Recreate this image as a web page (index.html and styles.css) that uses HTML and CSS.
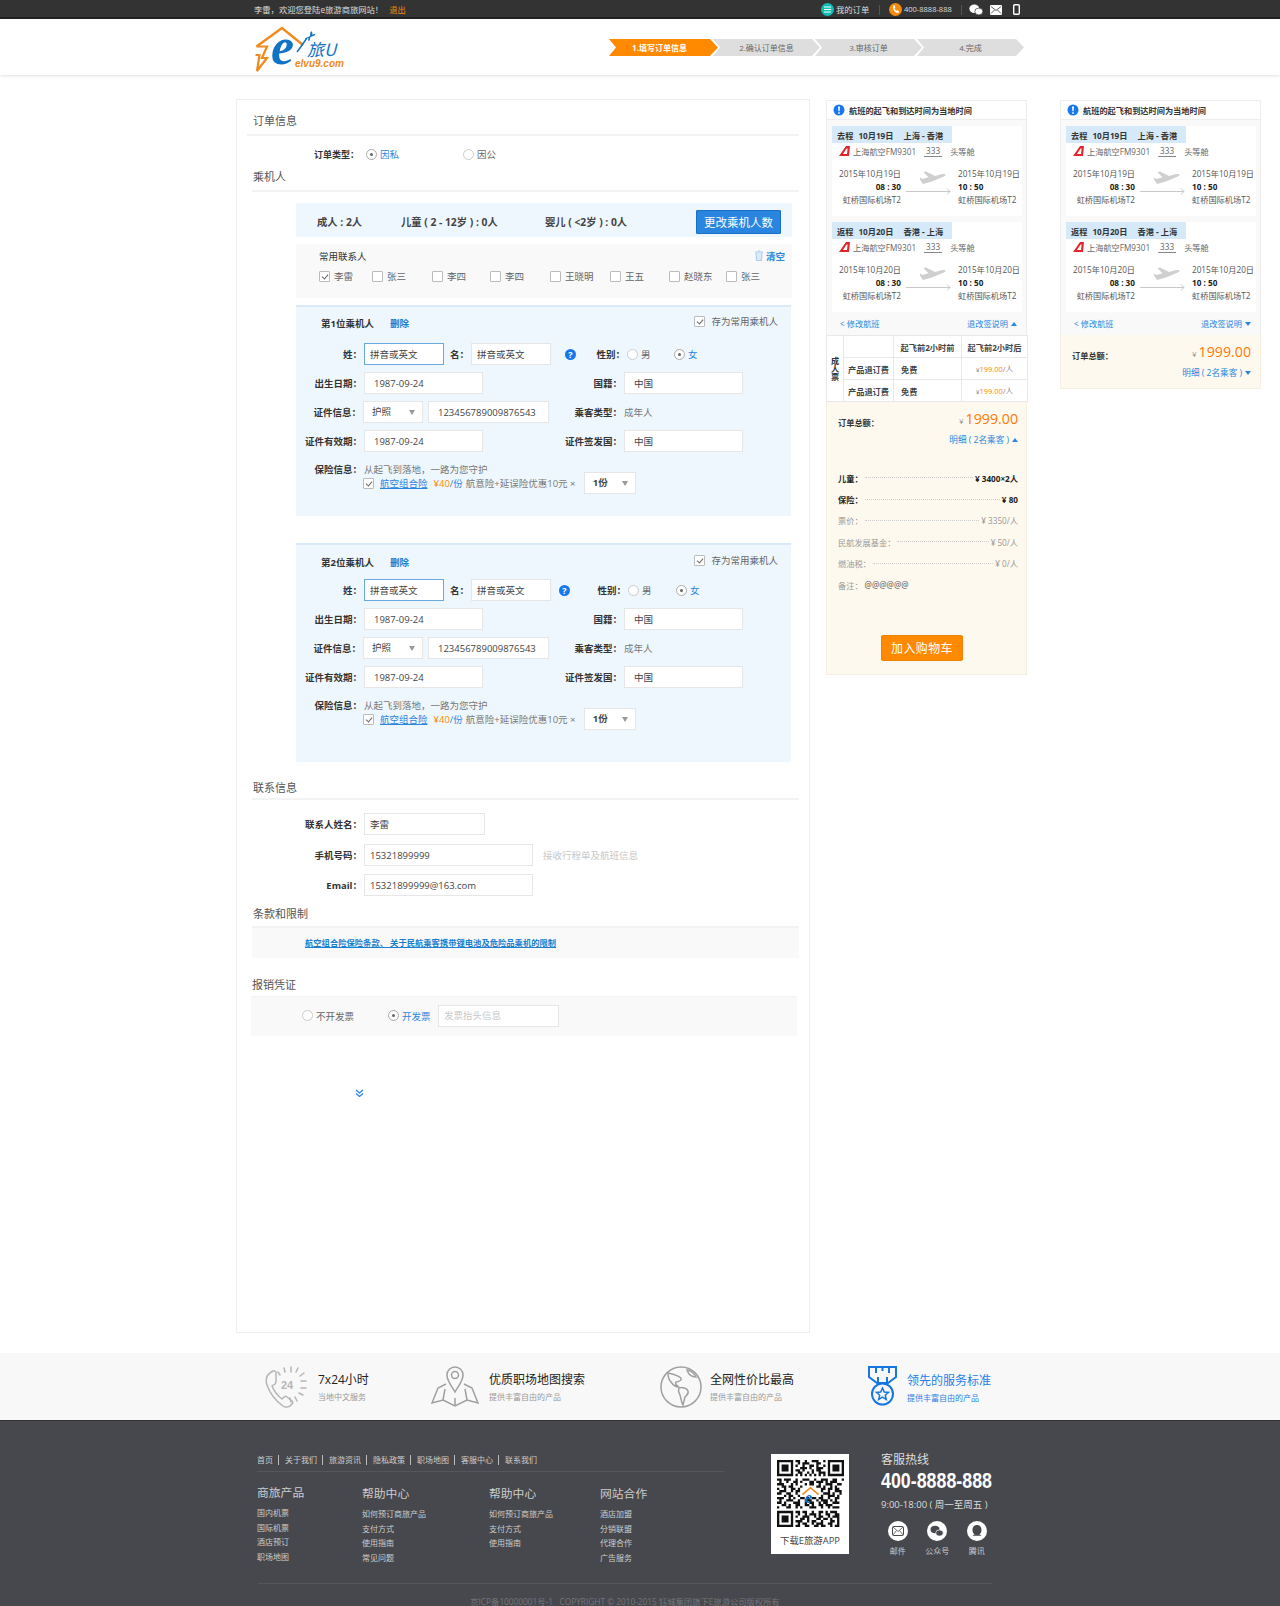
FILE: index.html
```html
<!DOCTYPE html>
<html lang="zh-CN">
<head>
<meta charset="utf-8">
<title>填写订单信息 - e旅U</title>
<link rel="stylesheet" href="styles.css">
</head>
<body>
<svg class="defs" width="0" height="0" aria-hidden="true">
  <symbol id="airline" viewBox="0 0 11 10"><path fill-rule="evenodd" d="M0 10 7 0h4l-1 10zM4 8h4l.6-5.500h-1z" fill="#e3262e"/></symbol>
  <symbol id="flyline" viewBox="0 0 46 26"><path d="M14 9.5 17 14l9-2.6 13-5.4c2-1-.5-2.6-3.5-1.8L29 6 20 1.5l-2.500.7 5 5-6 1.8-2.200-1.500z" fill="#cfcfcf"/><path d="M0 21.500h44M41 18.500l3 3-3 3" fill="none" stroke="#c8c8c8"/></symbol>
  <symbol id="alert" viewBox="0 0 12 12"><circle cx="6" cy="6" r="5.500" fill="#1677ee"/><path d="M5 2.500h2L6.600 7.300H5.400zM5.200 8.200h1.600v1.500H5.200z" fill="#fff"/></symbol>
</svg>

<header class="topbar">
  <div class="topbar-left">李雷，欢迎您登陆e旅游商旅网站！<a class="logout">退出</a></div>
  <div class="topbar-right">
    <svg class="tb-ico" width="13" height="13" viewBox="0 0 13 13"><circle cx="6.500" cy="6.500" r="6.500" fill="#11bcb5"/><path d="M3 4h7M3 6.500h7M3 9h7" stroke="#fff" stroke-width="1.100"/></svg>
    <span class="tb-order">我的订单</span>
    <i class="tb-div"></i>
    <svg class="tb-ico" width="13" height="13" viewBox="0 0 13 13"><circle cx="6.500" cy="6.500" r="6.500" fill="#f58a0b"/><path d="M4 2.500 5.500 2l1 2.500-1 .8c.3 1 .9 1.800 2 2.400l1-.7 1.700 2-1 1C6 10 3.300 6.500 4 2.500z" fill="#fff"/></svg>
    <span class="tb-phone">400-8888-888</span>
    <i class="tb-div tb-div2"></i>
    <svg width="14" height="12" viewBox="0 0 14 12"><ellipse cx="5.300" cy="4.700" rx="5" ry="4.200" fill="#fff"/><ellipse cx="9.800" cy="7.500" rx="4" ry="3.400" fill="#fff" stroke="#333" stroke-width=".7"/></svg>
    <svg class="tb-mail" width="12" height="10" viewBox="0 0 12 10"><rect width="12" height="10" rx="1" fill="#fff"/><path d="M1 1.500 6 5.500l5-4M1 8.500l3.500-3.500M11 8.500 7.500 5" fill="none" stroke="#333" stroke-width=".8"/></svg>
    <svg class="tb-mobile" width="7" height="11" viewBox="0 0 7 11"><rect x=".7" y=".7" width="5.600" height="9.600" rx="1" fill="none" stroke="#fff" stroke-width="1.400"/></svg>
  </div>
</header>

<div class="masthead">
  <svg class="logo" width="100" height="54" viewBox="0 0 100 54">
    <path d="M6.500 24.500 32 6l21 17" fill="none" stroke="#f08a1d" stroke-width="2.400"/>
    <path d="M6.500 24.500H17L12 36h5L7 49l2.500-16H5.500" fill="none" stroke="#f08a1d" stroke-width="2.200"/>
    <text class="logo-e" x="21" y="42">e</text>
    <path d="M47 30c4-5 7-10 10-14" fill="none" stroke="#1273c4" stroke-width="1.500"/>
    <path d="M55 16.500 60 14l.5-4 1.500-.8.500 3.500 3-1.200-1 2-4 1.500-1 3.500-1.300.5.200-3.300-3.400 1.400z" fill="#1273c4"/>
    <text class="logo-cn" x="57" y="34">旅U</text>
    <text class="logo-en" x="45" y="45">elvu9.com</text>
  </svg>
  <ol class="steps">
    <li class="step step-on">1.填写订单信息</li>
    <li class="step">2.确认订单信息</li>
    <li class="step">3.审核订单</li>
    <li class="step">4.完成</li>
  </ol>
</div>

<div class="body-wrap">
  <main class="card">
    <h2 class="sec-head sec-first">订单信息</h2>
    <div class="type-row">
      <span class="type-label">订单类型：</span>
      <span class="opt opt-on opt-w-a"><i class="radio on"></i>因私</span>
      <span class="opt"><i class="radio"></i>因公</span>
    </div>
    <h2 class="sec-head sec-pax">乘机人</h2>

    <div class="counts">
      <span class="c1">成人 : 2人</span>
      <span class="c2">儿童 ( 2 - 12岁 ) : 0人</span>
      <span class="c3">婴儿 ( &lt;2岁 ) : 0人</span>
      <button class="btn-change" type="button">更改乘机人数</button>
    </div>

    <div class="contacts">
      <div class="contacts-top">
        <span>常用联系人</span>
        <a class="clear">
          <svg width="10" height="11" viewBox="0 0 10 11"><path d="M1 2h8M2 2.500l.5 8h5l.5-8M4 1h2" fill="#dbeaf7" stroke="#a9cbe8"/></svg>清空</a>
      </div>
      <div class="contacts-grid">
        <label class="cc"><i class="check on"></i>李雷</label>
        <label class="cc"><i class="check"></i>张三</label>
        <label class="cc"><i class="check"></i>李四</label>
        <label class="cc"><i class="check"></i>李四</label>
        <label class="cc"><i class="check"></i>王晓明</label>
        <label class="cc"><i class="check"></i>王五</label>
        <label class="cc"><i class="check"></i>赵晓东</label>
        <label class="cc"><i class="check"></i>张三</label>
      </div>
    </div>

    <section class="pax pax-1">
      <div class="pax-title"><b>第1位乘机人</b><a class="del">删除</a><span class="save"><i class="check on"></i>存为常用乘机人</span></div>
      <div class="row row-first">
        <span class="lbl l68">姓：</span><input class="inp w80 focus" value="拼音或英文" readonly>
        <span class="lbl l27">名：</span><input class="inp w80" value="拼音或英文" readonly>
        <span class="help">?</span>
        <span class="lbl lsex">性别：</span>
        <span class="opt opt-w-sex"><i class="radio"></i>男</span>
        <span class="opt opt-on"><i class="radio on"></i>女</span>
      </div>
      <div class="row"><span class="lbl l68">出生日期：</span><input class="inp w119 pad" value="1987-09-24" readonly><span class="lbl l141">国籍：</span><input class="inp w119 pad" value="中国" readonly></div>
      <div class="row"><span class="lbl l67">证件信息：</span><div class="sel w60">护照</div><input class="inp w121 pad ml5" value="123456789009876543" readonly><span class="lbl l75">乘客类型：</span><span class="muted">成年人</span></div>
      <div class="row"><span class="lbl l68">证件有效期：</span><input class="inp w119 pad" value="1987-09-24" readonly><span class="lbl l141">证件签发国：</span><input class="inp w119 pad" value="中国" readonly></div>
      <div class="row row-ins"><span class="lbl l68">保险信息：</span><span class="muted">从起飞到落地，一路为您守护</span></div>
      <div class="row-ins2"><i class="check on"></i><a class="ins-link">航空组合险</a><span class="ins-price"><em>¥40</em>/份</span><span class="ins-note">航意险+延误险优惠10元 ×</span><div class="sel w52">1份</div></div>
    </section>

    <section class="pax pax-2">
      <div class="pax-title"><b>第2位乘机人</b><a class="del">删除</a><span class="save"><i class="check on"></i>存为常用乘机人</span></div>
      <div class="row row-first">
        <span class="lbl l68">姓：</span><input class="inp w80 focus" value="拼音或英文" readonly>
        <span class="lbl l27">名：</span><input class="inp w80" value="拼音或英文" readonly>
        <span class="help">?</span>
        <span class="lbl lsex">性别：</span>
        <span class="opt opt-w-sex"><i class="radio"></i>男</span>
        <span class="opt opt-on"><i class="radio on"></i>女</span>
      </div>
      <div class="row"><span class="lbl l68">出生日期：</span><input class="inp w119 pad" value="1987-09-24" readonly><span class="lbl l141">国籍：</span><input class="inp w119 pad" value="中国" readonly></div>
      <div class="row"><span class="lbl l67">证件信息：</span><div class="sel w60">护照</div><input class="inp w121 pad ml5" value="123456789009876543" readonly><span class="lbl l75">乘客类型：</span><span class="muted">成年人</span></div>
      <div class="row"><span class="lbl l68">证件有效期：</span><input class="inp w119 pad" value="1987-09-24" readonly><span class="lbl l141">证件签发国：</span><input class="inp w119 pad" value="中国" readonly></div>
      <div class="row row-ins"><span class="lbl l68">保险信息：</span><span class="muted">从起飞到落地，一路为您守护</span></div>
      <div class="row-ins2"><i class="check on"></i><a class="ins-link">航空组合险</a><span class="ins-price"><em>¥40</em>/份</span><span class="ins-note">航意险+延误险优惠10元 ×</span><div class="sel w52">1份</div></div>
    </section>

    <h2 class="sec-head sec-contact">联系信息</h2>
    <div class="c-row c-row-1"><span class="lbl c-lbl">联系人姓名：</span><input class="inp w121 cpad" value="李雷" readonly></div>
    <div class="c-row c-row-2"><span class="lbl c-lbl">手机号码：</span><input class="inp w169 cpad" value="15321899999" readonly><span class="hint">接收行程单及航班信息</span></div>
    <div class="c-row c-row-3"><span class="lbl c-lbl">Email：</span><input class="inp w169 cpad" value="15321899999@163.com" readonly></div>

    <h2 class="sec-head sec-terms">条款和限制</h2>
    <div class="terms"><a>航空组合险保险条款、 关于民航乘客携带锂电池及危险品乘机的限制</a></div>

    <h2 class="sec-head sec-invoice">报销凭证</h2>
    <div class="invoice">
      <span class="opt opt-w-inv"><i class="radio"></i>不开发票</span>
      <span class="opt opt-on opt-w-inv2"><i class="radio on"></i>开发票</span>
      <input class="inp w121 cpad" placeholder="发票抬头信息" readonly>
    </div>
    <svg class="more" width="9" height="9" viewBox="0 0 9 9"><path d="M1 1l3.500 3L8 1M1 4.500l3.500 3 3.500-3" fill="none" stroke="#2a85e0" stroke-width="1.300"/></svg>
  </main>

  <aside class="side">
    <div class="side-head"><svg width="12" height="12"><use href="#alert"/></svg>航班的起飞和到达时间为当地时间</div>
    <div class="side-body">
      <div class="flight">
        <div class="pill"><b>去程</b><b class="pill-date">10月19日</b><span class="pill-route">上海 - 香港</span></div>
        <div class="carrier"><svg width="11" height="10"><use href="#airline"/></svg><span>上海航空FM9301</span><u>333</u><span>头等舱</span></div>
        <div class="route">
          <span class="r-l">2015年10月19日</span><svg class="fly" width="46" height="26"><use href="#flyline"/></svg><span>2015年10月19日</span>
          <b class="r-l">08 : 30</b><b>10 : 50</b>
          <span class="r-l">虹桥国际机场T2</span><span>虹桥国际机场T2</span>
        </div>
      </div>
      <div class="flight flight-2">
        <div class="pill"><b>返程</b><b class="pill-date">10月20日</b><span class="pill-route">香港 - 上海</span></div>
        <div class="carrier"><svg width="11" height="10"><use href="#airline"/></svg><span>上海航空FM9301</span><u>333</u><span>头等舱</span></div>
        <div class="route">
          <span class="r-l">2015年10月20日</span><svg class="fly" width="46" height="26"><use href="#flyline"/></svg><span>2015年10月20日</span>
          <b class="r-l">08 : 30</b><b>10 : 50</b>
          <span class="r-l">虹桥国际机场T2</span><span>虹桥国际机场T2</span>
        </div>
      </div>
      <div class="side-links"><a>&lt; 修改航班</a><a>退改签说明<i class="tri up"></i></a></div>
    </div>
    <table class="rules">
      <colgroup><col class="col-a"><col class="col-b"><col class="col-c"><col class="col-d"></colgroup>
      <tr><th class="vert" rowspan="3">成<br>人<br>票</th><th></th><th>起飞前2小时前</th><th>起飞前2小时后</th></tr>
      <tr><th>产品退订费</th><td class="strong">免费</td><td class="fee-cell"><small>¥</small><em>199.00</em>/人</td></tr>
      <tr><th>产品退订费</th><td class="strong">免费</td><td class="fee-cell"><small>¥</small><em>199.00</em>/人</td></tr>
    </table>
    <div class="sum sum-open">
      <div class="sum-total"><b>订单总额：</b><span class="price"><small>¥</small>1999.00</span></div>
      <div class="sum-detail">明细 ( 2名乘客 )<i class="tri up"></i></div>
      <div class="fees">
        <div class="fee fee-main"><span>儿童：</span><i class="dots"></i><span>¥ 3400×2人</span></div>
        <div class="fee fee-main"><span>保险：</span><i class="dots"></i><span>¥ 80</span></div>
        <div class="fee"><span>票价：</span><i class="dots"></i><span>¥ 3350/人</span></div>
        <div class="fee"><span>民航发展基金：</span><i class="dots"></i><span>¥ 50/人</span></div>
        <div class="fee"><span>燃油税：</span><i class="dots"></i><span>¥ 0/人</span></div>
        <div class="fee"><span>备注：</span><span class="fee-note">@@@@@@</span></div>
      </div>
      <button class="btn-cart" type="button">加入购物车</button>
    </div>
  </aside>

  <aside class="side side-2">
    <div class="side-head"><svg width="12" height="12"><use href="#alert"/></svg>航班的起飞和到达时间为当地时间</div>
    <div class="side-body">
      <div class="flight">
        <div class="pill"><b>去程</b><b class="pill-date">10月19日</b><span class="pill-route">上海 - 香港</span></div>
        <div class="carrier"><svg width="11" height="10"><use href="#airline"/></svg><span>上海航空FM9301</span><u>333</u><span>头等舱</span></div>
        <div class="route">
          <span class="r-l">2015年10月19日</span><svg class="fly" width="46" height="26"><use href="#flyline"/></svg><span>2015年10月19日</span>
          <b class="r-l">08 : 30</b><b>10 : 50</b>
          <span class="r-l">虹桥国际机场T2</span><span>虹桥国际机场T2</span>
        </div>
      </div>
      <div class="flight flight-2">
        <div class="pill"><b>返程</b><b class="pill-date">10月20日</b><span class="pill-route">香港 - 上海</span></div>
        <div class="carrier"><svg width="11" height="10"><use href="#airline"/></svg><span>上海航空FM9301</span><u>333</u><span>头等舱</span></div>
        <div class="route">
          <span class="r-l">2015年10月20日</span><svg class="fly" width="46" height="26"><use href="#flyline"/></svg><span>2015年10月20日</span>
          <b class="r-l">08 : 30</b><b>10 : 50</b>
          <span class="r-l">虹桥国际机场T2</span><span>虹桥国际机场T2</span>
        </div>
      </div>
      <div class="side-links"><a>&lt; 修改航班</a><a>退改签说明<i class="tri down"></i></a></div>
    </div>
    <div class="sum">
      <div class="sum-total"><b>订单总额：</b><span class="price"><small>¥</small>1999.00</span></div>
      <div class="sum-detail">明细 ( 2名乘客 )<i class="tri down"></i></div>
    </div>
  </aside>
</div>

<section class="features">
  <div class="feature f1">
    <svg width="44" height="44" viewBox="0 0 44 44" fill="none" stroke="#b5b5b5" stroke-width="1.500"><path d="M9 6C3 9 1 14 3 20c3 9 9 16 16 21 3 2 7 1 9-2 1-1 1-2 0-3l-5-4c-1-1-2-1-3 0l-2 2c-4-3-8-8-10-13l3-2c1-1 1-2 1-3L12 7c-1-1-2-2-3-1z"/><path d="M14 7l2 3M20 3l1 4M27 2v5M34 3l-2 4M40 8l-4 3M42 16h-5M42 23h-5M39 30l-4-2M33 36l-2-4M26 33l1 4" stroke-linecap="round"/><text class="f-24" x="17" y="24">24</text></svg>
    <div class="f-text"><div class="f-title">7x24小时</div><div class="f-sub">当地中文服务</div></div>
  </div>
  <div class="feature f2">
    <svg width="48" height="44" viewBox="0 0 48 44" fill="none" stroke="#a0a0a0" stroke-width="1.500"><path d="M24 27c-4-7-8-11-8-17a8 8 0 0 1 16 0c0 6-4 10-8 17z"/><circle cx="24" cy="10" r="3.500"/><path d="M15 19 7 23 1 38l11-3 12 6 12-6 11 3-6-15-8-4M12 35l2-11M36 35l-2-11M24 33v8"/></svg>
    <div class="f-text"><div class="f-title">优质职场地图搜索</div><div class="f-sub">提供丰富自由的产品</div></div>
  </div>
  <div class="feature f3">
    <svg width="44" height="44" viewBox="0 0 44 44" fill="none" stroke="#a0a0a0" stroke-width="1.500"><circle cx="22" cy="22" r="20"/><path d="M9 8c4 1 9 2 13 5 1 2-2 4-5 4-1 2 1 4 3 5-3 0-6-2-8-5-2-2-3-5-3-9zM20 23c3-1 8 0 9 3s-1 4-3 6l-2 8c-2-3-2-7-3-10-1-2-2-5-1-7zM28 5c3 0 7 3 9 7-3 0-7-1-9-7z"/></svg>
    <div class="f-text"><div class="f-title">全网性价比最高</div><div class="f-sub">提供丰富自由的产品</div></div>
  </div>
  <div class="feature f4">
    <svg width="29" height="40" viewBox="0 0 29 40" fill="none" stroke="#1677e0" stroke-width="2"><path d="M1 1h27v10l-8 6H9L1 11z"/><path d="M8 1v6M14.500 1v4M21 1v6M10 17v-6M19 17v-6"/><circle cx="14.500" cy="28" r="10.500"/><path d="m14.500 22 1.800 4 4.200.4-3.200 2.800 1 4.200-3.800-2.300-3.800 2.300 1-4.200-3.200-2.800 4.200-.4z" stroke-width="1.500"/></svg>
    <div class="f-text"><div class="f-title">领先的服务标准</div><div class="f-sub">提供丰富自由的产品</div></div>
  </div>
</section>

<footer class="footer">
  <div class="foot-main">
    <div class="foot-left">
      <nav class="foot-nav"><a>首页</a><a>关于我们</a><a>旅游资讯</a><a>隐私政策</a><a>职场地图</a><a>客服中心</a><a>联系我们</a></nav>
      <div class="foot-cols">
        <div class="foot-col foot-col-1"><h3>商旅产品</h3><a>国内机票</a><a>国际机票</a><a>酒店预订</a><a>职场地图</a></div>
        <div class="foot-col"><h3>帮助中心</h3><a>如何预订商旅产品</a><a>支付方式</a><a>使用指南</a><a>常见问题</a></div>
        <div class="foot-col"><h3>帮助中心</h3><a>如何预订商旅产品</a><a>支付方式</a><a>使用指南</a></div>
        <div class="foot-col"><h3>网站合作</h3><a>酒店加盟</a><a>分销联盟</a><a>代理合作</a><a>广告服务</a></div>
      </div>
    </div>
    <div class="qr">
      <svg width="67" height="67" viewBox="0 0 29 29">
        <path fill="#111" fill-rule="evenodd" d="M0 0h7v7H0zM1 1v5h5V1zM2 2h3v3H2zM22 0h7v7h-7zM23 1v5h5V1zM24 2h3v3h-3zM0 22h7v7H0zM1 23v5h5v-5zM2 24h3v3H2z"/>
        <path stroke="#111" stroke-width="1" fill="none" d="M8 .5h2m2 0h1m2 0h3m2 0h1M9 1.500h1m1 0h3m3 0h2M8 2.500h1m2 0h1m2 0h2m1 0h1m2 0h1M10 3.500h3m1 0h1m2 0h3M8 4.500h2m1 0h1m3 0h1m1 0h2M9 5.500h2m2 0h1m1 0h1m2 0h3M8 6.500h1m1 0h1m1 0h1m1 0h1m1 0h1m1 0h1m1 0h1M0 8.500h2m1 0h3m2 0h1m2 0h3m2 0h1m2 0h3m2 0h2m2 0h1M1 9.500h1m2 0h1m2 0h2m1 0h1m3 0h2m1 0h3m1 0h1m1 0h3M0 10.500h3m3 0h1m1 0h1m3 0h1m1 0h2m2 0h1m2 0h3m2 0h2M2 11.500h2m1 0h2m3 0h1m6 0h2m1 0h1m2 0h1m1 0h1M0 12.500h1m2 0h1m2 0h2m1 0h1m9 0h2m1 0h2m1 0h2M1 13.500h3m2 0h1m1 0h2m9 0h1m2 0h1m2 0h3M0 14.500h2m2 0h2m2 0h1m11 0h3m1 0h1m2 0h1M3 15.500h1m1 0h2m2 0h1m9 0h1m2 0h3m1 0h1M0 16.500h3m2 0h1m1 0h1m2 0h2m1 0h1m1 0h2m1 0h2m2 0h1m2 0h2M1 17.500h1m2 0h3m2 0h1m2 0h3m2 0h1m1 0h3m1 0h1m1 0h1M0 18.500h2m1 0h1m3 0h3m2 0h1m1 0h2m2 0h1m1 0h2m2 0h3M2 19.500h2m1 0h1m2 0h2m2 0h2m1 0h1m2 0h2m1 0h3M0 20.500h1m3 0h2m2 0h1m1 0h1m3 0h3m2 0h1m2 0h1m1 0h3M8 22.500h2m1 0h2m2 0h1m2 0h2m1 0h1m1 0h3M9 23.500h1m2 0h1m1 0h3m1 0h1m2 0h2m2 0h2M8 24.500h1m2 0h3m2 0h1m1 0h2m2 0h1m1 0h3M10 25.500h2m1 0h1m3 0h2m1 0h2m1 0h1m2 0h1M8 26.500h3m2 0h1m1 0h2m2 0h1m3 0h2m1 0h1M9 27.500h1m1 0h2m2 0h1m1 0h3m2 0h2m2 0h1M8 28.500h2m2 0h2m2 0h2m1 0h2m2 0h1m1 0h2"/>
        <path d="M11 15l3.500-3 3.500 3" fill="none" stroke="#f08a1d" stroke-width=".7"/>
        <text class="qr-e" x="12" y="18.500">e</text>
      </svg>
      <div class="qr-label">下载E旅游APP</div>
    </div>
    <div class="hotline">
      <div class="hot-title">客服热线</div>
      <div class="hot-num">400-8888-888</div>
      <div class="hot-hours">9:00-18:00 ( 周一至周五 )</div>
      <div class="socials">
        <div class="social"><svg width="20" height="20" viewBox="0 0 20 20"><circle cx="10" cy="10" r="10" fill="#fff"/><rect x="4.500" y="5.500" width="11" height="9" rx="1" fill="none" stroke="#47484d"/><path d="m5 6 5 4.500L15 6M5 14l3.500-4.500M15 14l-3.500-4.500" fill="none" stroke="#47484d" stroke-width=".8"/></svg><span>邮件</span></div>
        <div class="social"><svg width="20" height="20" viewBox="0 0 20 20"><circle cx="10" cy="10" r="10" fill="#fff"/><ellipse cx="8" cy="8.500" rx="4.500" ry="3.700" fill="#47484d"/><ellipse cx="12.500" cy="12" rx="3.800" ry="3.100" fill="#47484d" stroke="#fff" stroke-width=".7"/></svg><span>公众号</span></div>
        <div class="social"><svg width="20" height="20" viewBox="0 0 20 20"><circle cx="10" cy="10" r="10" fill="#fff"/><path d="M10 4c-3 0-4.500 2.300-4.500 5 0 2 1 3.500 2.200 4.500-1 .3-2 .7-2.200 1.300h9c-.2-.6-1.200-1-2.200-1.300 1.200-1 2.200-2.500 2.200-4.500 0-2.700-1.500-5-4.500-5z" fill="#47484d"/></svg><span>腾讯</span></div>
      </div>
    </div>
  </div>
  <div class="foot-copy">京ICP备10000001号-1 &nbsp; COPYRIGHT © 2010-2015 钰城集团旗下E旅游公司版权所有</div>
</footer>
</body>
</html>
```

FILE: styles.css
```css
* { box-sizing: border-box; }
html, body { margin: 0; padding: 0; }
body {
  width: 1280px;
  height: 1606px;
  overflow: hidden;
  background: #fff;
  color: #333;
  font-family: "Open Sans", "Noto Sans CJK SC", sans-serif;
  font-size: 9.5px;
}
h2, h3, ol, p { margin: 0; padding: 0; font-weight: normal; }
ol { list-style: none; }
a { color: inherit; text-decoration: none; }
i, em { font-style: normal; }
.defs { position: absolute; }
input { font-family: inherit; font-size: inherit; color: #444; outline: none; }

/* top bar */
.topbar {
  display: flex;
  justify-content: space-between;
  height: 19px;
  padding: 0 260px 0 254px;
  background: #333;
  border-bottom: 2px solid #222;
  color: #ddd;
  font-size: 8.300px;
  line-height: 19px;
  align-items: flex-start;
}
.logout { margin-left: 6px; color: #f58a0b; }
.topbar-right { display: flex; align-items: center; height: 19px; }
.tb-order { margin-left: 2px; width: 43px; }
.tb-div { width: 1px; height: 10px; background: #555; margin-right: 9px; }
.tb-div2 { margin-left: 10px; margin-right: 7px; }
.tb-phone { margin-left: 2px; font-size: 7.500px; width: 47px; white-space: nowrap; }
.tb-mail { margin-left: 7px; }
.tb-mobile { margin-left: 11px; }

/* masthead */
.masthead {
  display: flex;
  align-items: flex-start;
  height: 56px;
  padding-left: 250px;
  background: #fff;
  box-shadow: 0 1px 3px rgba(0, 0, 0, .12);
  position: relative;
}
.logo { margin-top: 3px; flex: none; overflow: visible; }
.logo-e { font: italic bold 52px "Liberation Serif", serif; fill: #1273c4; }
.logo-cn { font: italic 17px "Noto Sans CJK SC", sans-serif; fill: #1273c4; }
.logo-en { font: italic bold 10px "Liberation Sans", sans-serif; fill: #f08a1d; }
.steps { display: flex; margin: 20px 0 0 259px; }
.step {
  width: 107px;
  height: 17px;
  margin-left: -5px;
  background: #dedede;
  color: #666;
  font-size: 8px;
  line-height: 17px;
  text-align: center;
  clip-path: polygon(0 0, calc(100% - 8px) 0, 100% 50%, calc(100% - 8px) 100%, 0 100%, 7px 50%);
}
.step-on {
  width: 109px;
  margin-left: 0;
  padding-right: 8px;
  background: #ff8a00;
  color: #fff;
  font-weight: bold;
}

/* layout */
.body-wrap {
  display: flex;
  align-items: flex-start;
  height: 1278px;
  padding: 24px 0 0 236px;
}
.card {
  flex: none;
  width: 574px;
  height: 1234px;
  padding: 0 10px;
  border: 1px solid #eee;
}

/* section headings */
.sec-head {
  height: 18px;
  padding-left: 6px;
  font-size: 11px;
  line-height: 18px;
  color: #555;
  box-sizing: content-box;
  border-bottom: 2px solid #f3f3f3;
}
.sec-first { margin-top: 12px; padding-bottom: 4px; }
.sec-pax { margin: 3px 0 0 5px; padding-left: 1px; padding-bottom: 4px; }
.sec-contact { margin-top: 17px; padding-bottom: 1px; margin-left: 5px; padding-left: 1px; }
.sec-terms { margin-top: 9px; padding-bottom: 3px; margin-left: 5px; padding-left: 1px; }
.sec-invoice { margin: 18px 2px 0 4px; padding-left: 1px; padding-bottom: 2px; border-bottom-width: 1px; }

/* order type */
.type-row { display: flex; align-items: center; height: 22px; margin-top: 7px; padding-left: 67px; color: #666; }
.type-label { width: 52px; color: #333; font-weight: bold; font-size: 9px; }
.opt { display: inline-flex; align-items: center; gap: 3px; color: #666; }
.opt-on { color: #2a85e0; }
.opt-w-a { width: 97px; }
.radio {
  flex: none;
  position: relative;
  width: 11px;
  height: 11px;
  border: 1px solid #ccc;
  border-radius: 50%;
  background: #fff;
}
.radio.on { border-color: #aaa; }
.radio.on::after {
  content: "";
  position: absolute;
  left: 3px; top: 3px;
  width: 3px; height: 3px;
  border-radius: 50%;
  background: #666;
}
.check {
  flex: none;
  position: relative;
  width: 11px;
  height: 11px;
  border: 1px solid #bbb;
  border-radius: 1px;
  background: #fff;
}
.check.on::after {
  content: "";
  position: absolute;
  left: 2.500px; top: 1px;
  width: 3px; height: 5px;
  border: solid #666;
  border-width: 0 1px 1px 0;
  transform: rotate(40deg);
}

/* counts */
.counts {
  display: flex;
  align-items: center;
  width: 496px;
  height: 34px;
  margin: 11px 0 0 49px;
  padding-left: 21px;
  background: #eff7fe;
  font-size: 10.300px;
  font-weight: bold;
  color: #444;
}
.c1 { width: 84px; padding-top: 2px; }
.c2 { width: 144px; padding-top: 2px; }
.c3 { width: 120px; padding-top: 2px; }
.btn-change {
  margin: 3px 11px 0 auto;
  width: 85px;
  height: 24px;
  padding: 0;
  background: #2a85e0;
  border: 1px solid #1a6fc4;
  border-radius: 1px;
  color: #fff;
  font-family: inherit;
  font-size: 11.500px;
}

/* saved contacts */
.contacts {
  width: 496px;
  height: 54px;
  margin: 7px 0 0 49px;
  padding: 5px 7px 0 23px;
  background: #f9f9f9;
}
.contacts-top { display: flex; justify-content: space-between; align-items: center; height: 13px; }
.clear { display: inline-flex; align-items: center; gap: 2px; color: #2a85e0; font-weight: bold; }
.contacts-grid {
  display: grid;
  grid-template-columns: 53px 60px 58px 60px 60px 59px 57px auto;
  height: 14px;
  margin-top: 7px;
}
.cc { display: flex; align-items: center; gap: 4px; color: #666; }

/* passenger */
.pax {
  width: 495px;
  margin-left: 49px;
  background: #eff7fe;
  border-top: 2px solid #dbeafa;
}
.pax-1 { height: 211px; margin-top: 7px; }
.pax-2 { height: 219px; margin-top: 27px; }
.pax-title { display: flex; align-items: center; height: 22px; margin-top: 5px; padding-left: 25px; }
.pax-title b { width: 69px; }
.del { color: #1a7fd0; font-weight: bold; }
.save { display: flex; align-items: center; gap: 6px; margin-left: auto; margin-top: -4px; padding-right: 13px; color: #666; }
.row { display: flex; align-items: center; height: 22px; margin-top: 7px; }
.row-first { margin-top: 9px; }
.pax-2 .pax-title { margin-top: 6px; }
.pax-2 .row-first { margin-top: 6px; }
.lbl { flex: none; padding-right: 2px; text-align: right; font-weight: bold; color: #333; }
.l67 { width: 67px; }
.l68 { width: 68px; }
.l27 { width: 27px; }
.l75 { width: 75px; }
.l141 { width: 141px; }
.lsex { width: 51px; }
.inp {
  flex: none;
  height: 22px;
  padding: 0 5px;
  background: #fff;
  border: 1px solid #e6e6e6;
}
.inp.focus { border-color: #6aa8e0; }
.pad { padding: 0 9px; }
.cpad { padding: 0 5px; }
.ml5 { margin-left: 5px; }
.w80 { width: 80px; }
.w119 { width: 119px; }
.w121 { width: 121px; }
.w169 { width: 169px; }
.sel {
  position: relative;
  flex: none;
  height: 22px;
  padding-left: 8px;
  line-height: 20px;
  background: #fff;
  border: 1px solid #e6e6e6;
  color: #444;
}
.sel::after {
  content: "";
  position: absolute;
  right: 7px; top: 8px;
  border: 3px solid transparent;
  border-top: 5px solid #999;
  border-bottom: 0;
}
.w60 { width: 60px; }
.w52 { width: 52px; font-weight: bold; }
.help {
  flex: none;
  width: 11px;
  height: 11px;
  margin-left: 14px;
  border-radius: 50%;
  background: #1677ee;
  color: #fff;
  font-size: 9px;
  font-weight: bold;
  line-height: 11px;
  text-align: center;
}
.pax-2 .help { margin-left: 8px; margin-right: 7px; }
.opt-w-sex { width: 47px; }
.pax-2 .opt-w-sex { width: 48px; }
.muted { color: #777; margin-left: 0; }
.row-ins { height: 10px; margin-top: 12px; }
.row-ins2 { display: flex; align-items: center; height: 22px; margin-top: -2px; padding-left: 67px; }
.ins-link { margin-left: 6px; color: #2a85e0; text-decoration: underline; }
.ins-price { margin-left: 6px; color: #2a85e0; }
.ins-price em { color: #ff8a00; }
.ins-note { width: 118px; margin-left: 3px; color: #777; }

/* contact info */
.c-row { display: flex; align-items: center; height: 22px; padding-left: 49px; }
.c-lbl { width: 68px; }
.c-row-1 { margin-top: 13px; }
.c-row-2 { margin-top: 9px; }
.c-row-3 { margin-top: 8px; }
.hint { margin-left: 10px; color: #c8c8c8; }

/* terms */
.terms {
  height: 30px;
  margin-left: 5px;
  padding-left: 53px;
  background: #f9f9f9;
  line-height: 29px;
  font-size: 8.300px;
}
.terms a { color: #1a7fd0; text-decoration: underline; font-weight: bold; }

/* invoice */
.invoice {
  display: flex;
  align-items: center;
  height: 39px;
  margin: 0 2px 0 4px;
  padding: 0 0 2px 51px;
  background: #f9f9f9;
}
.opt-w-inv { width: 86px; }
.opt-w-inv2 { width: 50px; }
.invoice input::placeholder { color: #c8c8c8; }
.more { display: block; margin: 53px 0 0 108px; }

/* sidebar */
.side { flex: none; width: 201px; margin-left: 16px; margin-top: 1px; font-size: 8.200px; color: #555; }
.side-2 { margin-left: 33px; }
.side-head {
  display: flex;
  align-items: center;
  gap: 4px;
  height: 20px;
  padding-left: 6px;
  border: 1px solid #eee;
  color: #333;
  font-weight: bold;
}
.side-body { padding: 6px 4px 0 5px; background: #f9f9f9; border: solid #eee; border-width: 0 1px; }
.flight { height: 90px; background: #fff; }
.flight-2 { margin-top: 6px; }
.pill {
  display: flex;
  align-items: center;
  width: 120px;
  height: 17px;
  padding-left: 5px;
  background: #d5e9f9;
  color: #333;
}
.pill-date { margin-left: 5px; }
.pill-route { margin-left: 10px; font-weight: bold; }
.carrier { display: flex; align-items: center; height: 16px; padding-left: 7px; color: #666; }
.carrier svg { margin-right: 3px; }
.carrier u { margin: 0 8px; padding: 0 2px; text-decoration: none; border-bottom: 1px solid #888; line-height: 10px; }
.route {
  display: grid;
  grid-template-columns: 69px 57px auto;
  grid-auto-rows: 13px;
  margin-top: 8px;
  line-height: 13px;
  white-space: nowrap;
}
.r-l { grid-column: 1; text-align: right; }
.route b { color: #222; }
.fly { grid-column: 2; grid-row: 1 / 4; margin: 3px 0 0 5px; }
.side-links {
  display: flex;
  justify-content: space-between;
  height: 23px;
  padding: 0 5px 0 8px;
  line-height: 23px;
  color: #2a85e0;
}
.tri {
  display: inline-block;
  margin-left: 3px;
  border: 3px solid transparent;
  vertical-align: 0;
}
.tri.up { border-bottom: 4px solid #2a85e0; border-top: 0; vertical-align: 1px; }
.tri.down { border-top: 4px solid #2a85e0; border-bottom: 0; vertical-align: 1px; }

.rules { width: 201px; border-collapse: collapse; table-layout: fixed; background: #fff; }
.rules th, .rules td {
  height: 22px;
  padding: 0;
  border: 1px solid #e8e8e8;
  font-weight: bold;
  text-align: center;
  color: #444;
}
.col-a { width: 17px; }
.col-b { width: 50px; }
.col-c { width: 68px; }
.col-d { width: 66px; }
.rules .vert { line-height: 8px; color: #333; }
.rules td.strong { text-align: left; padding-left: 7px; }
.rules td.fee-cell { color: #888; font-weight: normal; font-size: 7.500px; }
.fee-cell small { font-size: 6px; }
.fee-cell em { color: #ff8a00; }

.sum {
  padding: 9px 9px 9px 11px;
  background: #fdf9ee;
  border: solid #f4efe0;
  border-width: 0 1px 1px;
  height: 54px;
}
.sum-open { height: 273px; padding-right: 8px; }
.sum-total { display: flex; justify-content: space-between; align-items: center; height: 22px; color: #333; }
.price { color: #ff7a00; font-size: 14.200px; line-height: 22px; margin-top: -4px; }
.price small { font-size: 8px; color: #888; margin-right: 2px; }
.sum-detail { height: 14px; font-size: 8.600px; line-height: 14px; text-align: right; color: #2a85e0; }
.fees { margin-top: 20px; }
.fee { display: flex; align-items: center; height: 21.400px; color: #999; }
.fee-main { color: #222; font-weight: bold; }
.dots { flex: 1; margin: 0 2px; border-bottom: 1px dotted #ccc; }
.fee-note { margin-left: 2px; color: #555; }
.btn-cart {
  display: block;
  width: 82px;
  height: 26px;
  margin: 40px 0 0 43px;
  padding: 0;
  background: #ff8a00;
  border: 1px solid #f08000;
  border-radius: 2px;
  color: #fff;
  font-family: inherit;
  font-size: 12px;
  letter-spacing: .4px;
}

/* features */
.features {
  display: flex;
  align-items: flex-start;
  height: 67px;
  padding: 12px 0 0 264px;
  background: #f8f8f8;
}
.feature { display: flex; gap: 10px; flex: none; }
.f1 { width: 167px; gap: 10px; }
.f2 { width: 228px; margin-top: 0; }
.f3 { width: 209px; gap: 7px; }
.f4 { margin-top: 1px; }
.f-24 { font: bold 11px "Liberation Sans", sans-serif; fill: #b5b5b5; stroke: none; }
.f-text { padding-top: 7px; }
.f-title { font-size: 12px; line-height: 16px; color: #222; }
.f-sub { margin-top: 3px; font-size: 8px; line-height: 12px; color: #999; }
.f4 .f-title, .f4 .f-sub { color: #1f7fe8; }

/* footer */
.footer {
  height: 186px;
  overflow: hidden;
  background: #47484d;
  border-top: 1px solid #333;
  color: #ccc;
  font-size: 8px;
}
.foot-main { display: flex; height: 162px; padding: 33px 0 0 257px; }
.foot-left { flex: none; width: 513px; }
.foot-nav { display: flex; width: 467px; height: 12px; padding-bottom: 5px; border-bottom: 1px solid #55565b; line-height: 12px; box-sizing: content-box; }
.foot-nav a + a { margin-left: 6px; padding-left: 6px; position: relative; }
.foot-nav a + a::before { content: ""; position: absolute; left: -1px; top: 1px; width: 1px; height: 10px; background: #bbb; }
.foot-cols { display: grid; grid-template-columns: 105px 127px 111px auto; margin-top: 13px; }
.foot-col h3 { height: 16px; margin-bottom: 6px; font-size: 11.800px; line-height: 16px; color: #ccc; }
.foot-col a { display: block; height: 14.500px; line-height: 14px; }
.foot-col-1 { margin-top: -1px; }
.qr {
  flex: none;
  width: 78px;
  height: 100px;
  margin-left: 1px;
  padding: 6px 0 0 6px;
  background: #fff;
  color: #444;
}
.qr svg { display: block; }
.qr-e { font: italic bold 7px "Liberation Serif", serif; fill: #1273c4; }
.qr-label { margin: 8px 0 0 -6px; text-align: center; font-size: 9.400px; line-height: 12px; white-space: nowrap; }
.hotline { margin-left: 32px; }
.hot-title { font-size: 12px; line-height: 12px; color: #ddd; }
.hot-num {
  margin-top: 3px;
  font-family: "Liberation Sans", sans-serif;
  font-size: 22px;
  font-weight: bold;
  line-height: 24px;
  color: #fff;
  white-space: nowrap;
  transform: scaleX(.81);
  transform-origin: left center;
}
.hot-hours { margin-top: 5px; font-size: 9.500px; line-height: 14px; color: #ddd; }
.socials { display: flex; margin: 9px 0 0 -3px; }
.social { display: flex; flex-direction: column; align-items: center; width: 39.500px; }
.social span { margin-top: 4px; line-height: 12px; }
.foot-copy {
  width: 734px;
  margin-left: 258px;
  padding-top: 11px;
  border-top: 1px solid #55565b;
  text-align: center;
  color: #74757a;
  font-size: 8.300px;
  line-height: 14px;
}
```
